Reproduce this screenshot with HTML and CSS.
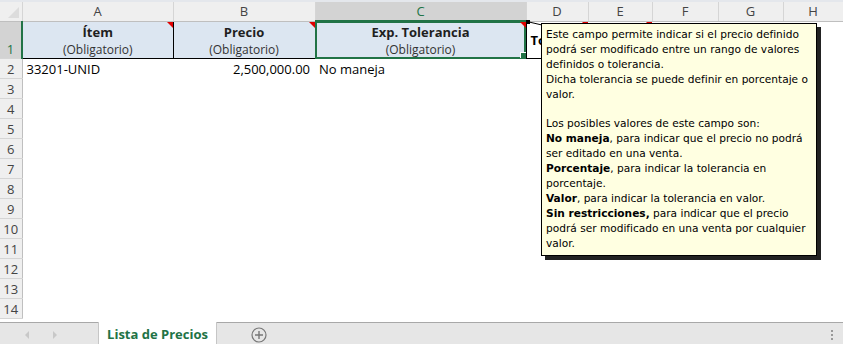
FILE: index.html
```html
<!DOCTYPE html>
<html lang="es">
<head>
  <meta charset="UTF-8">
  <title>Lista de Precios</title>
  <link rel="stylesheet" href="styles.css">
</head>
<body>
  <div class="sheet">
    <table class="grid">
      <colgroup>
        <col class="c-rh"><col class="c-a"><col class="c-b"><col class="c-c"><col class="c-d"><col class="c-e"><col class="c-f"><col class="c-g"><col class="c-h">
      </colgroup>
      <tr class="col-heads">
        <th class="corner"><span class="corner-tri"></span></th>
        <th>A</th><th>B</th><th class="sel">C</th><th>D</th><th>E</th><th>F</th><th>G</th><th>H</th>
      </tr>
      <tr class="row-1">
        <th class="rh sel">1</th>
        <td class="head-cell"><b>Ítem</b><span>(Obligatorio)</span><i class="note"></i></td>
        <td class="head-cell"><b>Precio</b><span>(Obligatorio)</span><i class="note"></i></td>
        <td class="head-cell active"><b>Exp. Tolerancia</b><span>(Obligatorio)</span><i class="note"></i><i class="handle"></i></td>
        <td class="plain-head"><b>To</b><i class="note"></i></td>
        <td class="plain-head"><i class="note"></i></td>
        <td></td><td></td><td></td>
      </tr>
      <tr>
        <th class="rh">2</th>
        <td>33201-UNID</td><td class="num">2,500,000.00</td><td>No maneja</td><td></td><td></td><td></td><td></td><td></td>
      </tr>
      <tr><th class="rh">3</th><td></td><td></td><td></td><td></td><td></td><td></td><td></td><td></td></tr>
      <tr><th class="rh">4</th><td></td><td></td><td></td><td></td><td></td><td></td><td></td><td></td></tr>
      <tr><th class="rh">5</th><td></td><td></td><td></td><td></td><td></td><td></td><td></td><td></td></tr>
      <tr><th class="rh">6</th><td></td><td></td><td></td><td></td><td></td><td></td><td></td><td></td></tr>
      <tr><th class="rh">7</th><td></td><td></td><td></td><td></td><td></td><td></td><td></td><td></td></tr>
      <tr><th class="rh">8</th><td></td><td></td><td></td><td></td><td></td><td></td><td></td><td></td></tr>
      <tr><th class="rh">9</th><td></td><td></td><td></td><td></td><td></td><td></td><td></td><td></td></tr>
      <tr><th class="rh">10</th><td></td><td></td><td></td><td></td><td></td><td></td><td></td><td></td></tr>
      <tr><th class="rh">11</th><td></td><td></td><td></td><td></td><td></td><td></td><td></td><td></td></tr>
      <tr><th class="rh">12</th><td></td><td></td><td></td><td></td><td></td><td></td><td></td><td></td></tr>
      <tr><th class="rh">13</th><td></td><td></td><td></td><td></td><td></td><td></td><td></td><td></td></tr>
      <tr><th class="rh">14</th><td></td><td></td><td></td><td></td><td></td><td></td><td></td><td></td></tr>
    </table>

    <svg class="pointer" width="20" height="6" viewBox="0 0 20 6">
      <rect x="0" y="0" width="4" height="4" fill="#000"/>
      <line x1="3" y1="2" x2="16" y2="5" stroke="#000" stroke-width="1"/>
    </svg>

    <div class="comment">
      Este campo permite indicar si el precio definido podrá ser modificado entre un rango de valores definidos o tolerancia.<br>
      Dicha tolerancia se puede definir en porcentaje o valor.<br>
      <br>
      Los posibles valores de este campo son:<br>
      <b>No maneja</b>, para indicar que el precio no podrá ser editado en una venta.<br>
      <b>Porcentaje</b>, para indicar la tolerancia en porcentaje.<br>
      <b>Valor</b>, para indicar la tolerancia en valor.<br>
      <b>Sin restricciones,</b> para indicar que el precio podrá ser modificado en una venta por cualquier valor.
    </div>
  </div>

  <div class="tabbar">
    <div class="tab-nav">
      <svg width="6" height="8" viewBox="0 0 6 8"><path d="M5 0 L1 4 L5 8 Z" fill="#c8c8c8"/></svg>
      <svg width="6" height="8" viewBox="0 0 6 8"><path d="M1 0 L5 4 L1 8 Z" fill="#c8c8c8"/></svg>
    </div>
    <div class="tab">Lista de Precios</div>
    <div class="add-sheet">
      <svg width="16" height="16" viewBox="0 0 16 16">
        <circle cx="8" cy="8" r="7" fill="none" stroke="#777" stroke-width="1.2"/>
        <path d="M8 4 V12 M4 8 H12" stroke="#777" stroke-width="1.4"/>
      </svg>
    </div>
    <div class="tab-fill"></div>
    <div class="dots"><i></i><i></i><i></i></div>
  </div>
</body>
</html>
```

FILE: styles.css
```css
body {
  margin: 0;
  width: 843px;
  height: 344px;
  overflow: hidden;
  background: #fff;
  font-family: 'Open Sans', 'Liberation Sans', sans-serif;
}

.sheet {
  position: relative;
  height: 320px;
  overflow: hidden;
  border-top: 2px solid #e4e7ec;
}

.grid {
  border-collapse: collapse;
  table-layout: fixed;
  width: 843px;
  font-size: 13px;
  color: #000;
}

.c-rh { width: 22px; }
.c-a { width: 151px; }
.c-b { width: 142px; }
.c-c { width: 211px; }
.c-d { width: 62px; }
.c-e { width: 64px; }
.c-f { width: 66px; }
.c-g { width: 65px; }
.c-h { width: 60px; }

.grid td,
.grid th {
  padding: 0;
  overflow: hidden;
  white-space: nowrap;
}

.col-heads th {
  height: 18px;
  background: #efefef;
  border-right: 1px solid #d5d5d5;
  border-bottom: 1px solid #bfbfbf;
  font-weight: normal;
  font-size: 13px;
  color: #444;
  text-align: center;
}

.col-heads th.sel {
  background: #d3d3d3;
  color: #217346;
  border-bottom: 2px solid #217346;
}

.corner {
  position: relative;
}

.corner-tri {
  position: absolute;
  right: 3px;
  bottom: 3px;
  border-left: 11px solid transparent;
  border-bottom: 11px solid #dcdcdc;
}

.rh {
  background: #efefef;
  border-right: 1px solid #bfbfbf;
  border-bottom: 1px solid #d5d5d5;
  font-weight: normal;
  font-size: 13px;
  color: #444;
  text-align: center;
  height: 19px;
  vertical-align: middle;
}

.rh.sel {
  background: #d3d3d3;
  color: #217346;
  border-right: 2px solid #217346;
  vertical-align: bottom;
}

.row-1 td {
  height: 34px;
}

.head-cell {
  position: relative;
  background: #dce6f1;
  border: 1px solid #000;
  text-align: center;
  vertical-align: top;
  padding-top: 2px !important;
}

.head-cell b,
.head-cell span {
  display: block;
  line-height: 17px;
}

.head-cell b {
  font-size: 13px;
  color: #1f1f1f;
}

.head-cell span {
  font-size: 12px;
  color: #333;
}

.head-cell.active {
  outline: 2px solid #217346;
  outline-offset: -2px;
}

.plain-head {
  position: relative;
  border-bottom: 1px solid #000;
  vertical-align: middle;
  padding-left: 4px !important;
  font-size: 13px;
}

.note {
  position: absolute;
  top: 0;
  right: 0;
  border-left: 6px solid transparent;
  border-top: 6px solid #e00000;
}

.handle {
  position: absolute;
  right: -1px;
  bottom: -1px;
  width: 5px;
  height: 5px;
  background: #217346;
  border: 1px solid #fff;
}

.grid tr + tr + tr td {
  height: 19px;
  padding-left: 4px;
}

.grid td.num {
  text-align: right;
  padding-right: 5px;
}

.pointer {
  position: absolute;
  left: 526px;
  top: 18px;
}

.comment {
  position: absolute;
  left: 541px;
  top: 21px;
  width: 266px;
  padding: 3px 4px 4px 4px;
  background: #ffffe1;
  border: 1px solid #000;
  box-shadow: 4px 4px 0 #222;
  font-family: 'DejaVu Sans', Tahoma, sans-serif;
  font-size: 10.6px;
  line-height: 14.9px;
  color: #000;
}

.tabbar {
  display: flex;
  align-items: stretch;
  height: 23px;
  background: #e6e6e6;
  border-top: 1px solid #a8a8a8;
}

.tab-nav {
  display: flex;
  align-items: center;
  gap: 22px;
  width: 98px;
  padding-left: 24px;
  box-sizing: border-box;
}

.tab {
  width: 119px;
  background: #fff;
  border-left: 1px solid #c6c6c6;
  border-right: 1px solid #c6c6c6;
  margin-top: -1px;
  color: #217346;
  font-weight: bold;
  font-size: 13px;
  text-align: center;
  line-height: 24px;
  box-sizing: border-box;
}

.add-sheet {
  display: flex;
  align-items: center;
  padding-left: 34px;
}

.tab-fill {
  flex: 1;
}

.dots {
  display: flex;
  flex-direction: column;
  justify-content: center;
  gap: 2px;
  padding-right: 10px;
}

.dots i {
  width: 2px;
  height: 2px;
  background: #999;
}
```
